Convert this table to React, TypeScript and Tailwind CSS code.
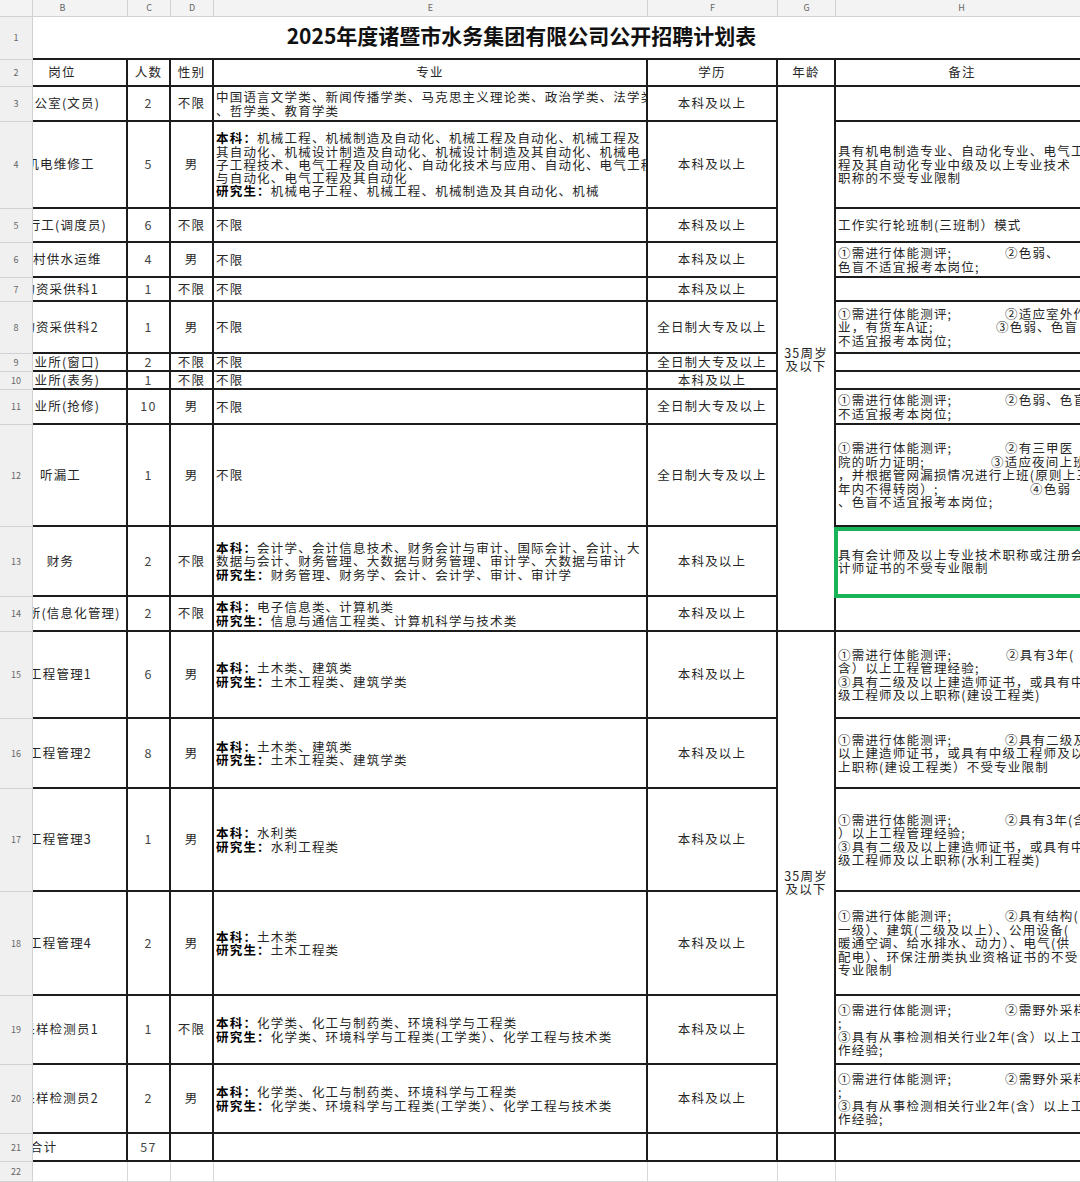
type ELine = { b?: string; t: string };
type HLine = string | [string, string, string];

type Row = {
  n: number;
  pos: string;
  num: string;
  sex: string;
  major: ELine[];
  edu: string;
  age?: "first" | "second";
  note: HLine[];
  box?: boolean;
};

const P = "①需进行体能测评;";
const BX = [{ t: "不限" }];

const rows: Row[] = [
  {
    n: 3, pos: "办公室(文员)", num: "2", sex: "不限",
    major: [{ t: "中国语言文学类、新闻传播学类、马克思主义理论类、政治学类、法学类" }, { t: "、哲学类、教育学类" }],
    edu: "本科及以上", age: "first", note: [],
  },
  {
    n: 4, pos: "机电维修工", num: "5", sex: "男",
    major: [
      { b: "本科：", t: "机械工程、机械制造及自动化、机械工程及自动化、机械工程及" },
      { t: "其自动化、机械设计制造及自动化、机械设计制造及其自动化、机械电" },
      { t: "子工程技术、电气工程及自动化、自动化技术与应用、自动化、电气工程" },
      { t: "与自动化、电气工程及其自动化" },
      { b: "研究生：", t: "机械电子工程、机械工程、机械制造及其自动化、机械" },
    ],
    edu: "本科及以上",
    note: ["具有机电制造专业、自动化专业、电气工程", "程及其自动化专业中级及以上专业技术", "职称的不受专业限制"],
  },
  { n: 5, pos: "运行工(调度员)", num: "6", sex: "不限", major: BX, edu: "本科及以上", note: ["工作实行轮班制(三班制）模式"] },
  {
    n: 6, pos: "农村供水运维", num: "4", sex: "男", major: BX, edu: "本科及以上",
    note: [[P, "w-[167px]", "②色弱、"], "色盲不适宜报考本岗位;"],
  },
  { n: 7, pos: "物资采供科1", num: "1", sex: "不限", major: BX, edu: "本科及以上", note: [] },
  {
    n: 8, pos: "物资采供科2", num: "1", sex: "男", major: BX, edu: "全日制大专及以上",
    note: [[P, "w-[167px]", "②适应室外作"], ["业，有货车A证;", "w-[158px]", "③色弱、色盲"], "不适宜报考本岗位;"],
  },
  { n: 9, pos: "营业所(窗口)", num: "2", sex: "不限", major: BX, edu: "全日制大专及以上", note: [] },
  { n: 10, pos: "营业所(表务)", num: "1", sex: "不限", major: BX, edu: "本科及以上", note: [] },
  {
    n: 11, pos: "营业所(抢修)", num: "10", sex: "男", major: BX, edu: "全日制大专及以上",
    note: [[P, "w-[167px]", "②色弱、色盲"], "不适宜报考本岗位;"],
  },
  {
    n: 12, pos: "听漏工", num: "1", sex: "男", major: BX, edu: "全日制大专及以上",
    note: [
      [P, "w-[167px]", "②有三甲医"],
      ["院的听力证明;", "w-[153px]", "③适应夜间上班"],
      "，并根据管网漏损情况进行上班(原则上三",
      ["年内不得转岗）;", "w-[192px]", "④色弱"],
      "、色盲不适宜报考本岗位;",
    ],
  },
  {
    n: 13, pos: "财务", num: "2", sex: "不限",
    major: [
      { b: "本科：", t: "会计学、会计信息技术、财务会计与审计、国际会计、会计、大" },
      { t: "数据与会计、财务管理、大数据与财务管理、审计学、大数据与审计" },
      { b: "研究生：", t: "财务管理、财务学、会计、会计学、审计、审计学" },
    ],
    edu: "本科及以上",
    note: ["具有会计师及以上专业技术职称或注册会", "计师证书的不受专业限制"],
    box: true,
  },
  {
    n: 14, pos: "营业所(信息化管理)", num: "2", sex: "不限",
    major: [{ b: "本科：", t: "电子信息类、计算机类" }, { b: "研究生：", t: "信息与通信工程类、计算机科学与技术类" }],
    edu: "本科及以上", note: [],
  },
  {
    n: 15, pos: "工程管理1", num: "6", sex: "男",
    major: [{ b: "本科：", t: "土木类、建筑类" }, { b: "研究生：", t: "土木工程类、建筑学类" }],
    edu: "本科及以上", age: "second",
    note: [[P, "w-[168px]", "②具有3年("], "含）以上工程管理经验;", "③具有二级及以上建造师证书，或具有中", "级工程师及以上职称(建设工程类)"],
  },
  {
    n: 16, pos: "工程管理2", num: "8", sex: "男",
    major: [{ b: "本科：", t: "土木类、建筑类" }, { b: "研究生：", t: "土木工程类、建筑学类" }],
    edu: "本科及以上",
    note: [[P, "w-[167px]", "②具有二级及"], "以上建造师证书，或具有中级工程师及以", "上职称(建设工程类）不受专业限制"],
  },
  {
    n: 17, pos: "工程管理3", num: "1", sex: "男",
    major: [{ b: "本科：", t: "水利类" }, { b: "研究生：", t: "水利工程类" }],
    edu: "本科及以上",
    note: [[P, "w-[167px]", "②具有3年(含"], "）以上工程管理经验;", "③具有二级及以上建造师证书，或具有中", "级工程师及以上职称(水利工程类)"],
  },
  {
    n: 18, pos: "工程管理4", num: "2", sex: "男",
    major: [{ b: "本科：", t: "土木类" }, { b: "研究生：", t: "土木工程类" }],
    edu: "本科及以上",
    note: [
      [P, "w-[167px]", "②具有结构("],
      "一级）、建筑(二级及以上）、公用设备(",
      "暖通空调、给水排水、动力）、电气(供",
      "配电）、环保注册类执业资格证书的不受",
      "专业限制",
    ],
  },
  {
    n: 19, pos: "采样检测员1", num: "1", sex: "不限",
    major: [{ b: "本科：", t: "化学类、化工与制药类、环境科学与工程类" }, { b: "研究生：", t: "化学类、环境科学与工程类(工学类）、化学工程与技术类" }],
    edu: "本科及以上",
    note: [[P, "w-[167px]", "②需野外采样"], ";", "③具有从事检测相关行业2年(含）以上工", "作经验;"],
  },
  {
    n: 20, pos: "采样检测员2", num: "2", sex: "男",
    major: [{ b: "本科：", t: "化学类、化工与制药类、环境科学与工程类" }, { b: "研究生：", t: "化学类、环境科学与工程类(工学类）、化学工程与技术类" }],
    edu: "本科及以上",
    note: [[P, "w-[167px]", "②需野外采样"], ";", "③具有从事检测相关行业2年(含）以上工", "作经验;"],
  },
];

const cell = "border-r-2 border-b-2 border-[#1c1c1c] overflow-hidden flex items-center";
const rowHead = "col-start-1 bg-[#f0f0f0] border-r border-b border-[#d2d2d2] flex items-center justify-center text-[9px] tracking-normal text-[#666]";
const letters = ["B", "C", "D", "E", "F", "G", "H"];

function Age() {
  return (
    <div className="flex flex-col items-center leading-[13px]">
      <span>35周岁</span>
      <span>及以下</span>
    </div>
  );
}

export default function App() {
  return (
    <div className="w-[1080px] h-[1182px] overflow-hidden bg-white text-[12.5px] tracking-[1.2px] text-[#262626] font-['Noto_Sans_CJK_SC','Noto_Sans',sans-serif]">
      <div className="grid w-[1088px] grid-cols-[33px_95px_43px_43px_434px_130px_58px_252px] grid-rows-[17px_43px_27px_35px_87px_34px_35px_24px_52px_18px_18px_35px_102px_70px_35px_87px_70px_103px_104px_69px_69px_28px_20px]">
        {/* column letters */}
        <div className="col-start-1 bg-[#f3f3f3] border-r border-b border-[#d2d2d2]" />
        {letters.map((l, i) => (
          <div
            key={l}
            className={
              "bg-[#f3f3f3] border-r border-b border-[#d2d2d2] flex items-center justify-center text-[9px] tracking-normal text-[#666] " +
              (i === 0 ? "pr-[35px]" : "")
            }
          >
            {l}
          </div>
        ))}

        {/* title */}
        <div className={rowHead}>1</div>
        <div className="col-start-2 col-span-7 border-b-2 border-[#1c1c1c] flex items-center justify-center pr-[78px] pb-[3px] text-[21px] tracking-normal font-bold text-[#111]">
          2025年度诸暨市水务集团有限公司公开招聘计划表
        </div>

        {/* header */}
        <div className={rowHead}>2</div>
        <div className={`col-start-2 ${cell} justify-center pr-[35px]`}>岗位</div>
        <div className={`col-start-3 ${cell} justify-center`}>人数</div>
        <div className={`col-start-4 ${cell} justify-center`}>性别</div>
        <div className={`col-start-5 ${cell} justify-center`}>专业</div>
        <div className={`col-start-6 ${cell} justify-center`}>学历</div>
        <div className={`col-start-7 ${cell} justify-center`}>年龄</div>
        <div className="col-start-8 border-b-2 border-[#1c1c1c] flex items-center justify-center">备注</div>

        {rows.map((r) => (
          <div key={r.n} className="contents">
            <div className={rowHead}>{r.n}</div>
            <div className={`col-start-2 ${cell} justify-center pr-[38px]`}>
              <span className="whitespace-nowrap shrink-0">{r.pos}</span>
            </div>
            <div className={`col-start-3 ${cell} justify-center text-[#444]`}>{r.num}</div>
            <div className={`col-start-4 ${cell} justify-center`}>{r.sex}</div>
            <div className={`col-start-5 ${cell} pl-[2px]`}>
              <div className="whitespace-nowrap leading-[13.3px] shrink-0">
                {r.major.map((l, i) => (
                  <div key={i}>
                    {l.b && <span className="font-bold text-black">{l.b}</span>}
                    {l.t}
                  </div>
                ))}
              </div>
            </div>
            <div className={`col-start-6 ${cell} justify-center`}>{r.edu}</div>
            {r.age === "first" && (
              <div className={`col-start-7 row-span-12 ${cell} justify-center`}>
                <Age />
              </div>
            )}
            {r.age === "second" && (
              <div className={`col-start-7 row-span-6 ${cell} justify-center`}>
                <Age />
              </div>
            )}
            <div className="col-start-8 relative border-b-2 border-[#1c1c1c] flex items-center pl-[2px]">
              <div className="whitespace-nowrap leading-[13.5px] shrink-0">
                {r.note.map((l, i) =>
                  typeof l === "string" ? (
                    <div key={i}>{l}</div>
                  ) : (
                    <div key={i}>
                      <span className={`inline-block ${l[1]}`}>{l[0]}</span>
                      {l[2]}
                    </div>
                  )
                )}
              </div>
              {r.box && (
                <div className="absolute z-10 -left-[2px] top-0 -bottom-[3px] -right-[10px] border-4 border-[#19b45a]" />
              )}
            </div>
          </div>
        ))}

        {/* total */}
        <div className={rowHead}>21</div>
        <div className={`col-start-2 ${cell} justify-start`}>
          <span className="whitespace-nowrap -ml-[3px]">合计</span>
        </div>
        <div className={`col-start-3 ${cell} justify-center text-[#444]`}>57</div>
        <div className={`col-start-4 ${cell}`} />
        <div className={`col-start-5 ${cell}`} />
        <div className={`col-start-6 ${cell}`} />
        <div className={`col-start-7 ${cell}`} />
        <div className="col-start-8 border-b-2 border-[#1c1c1c]" />

        {/* empty row */}
        <div className={rowHead}>22</div>
        {letters.map((l) => (
          <div key={l} className="border-r border-b border-[#d8d8d8]" />
        ))}
      </div>
    </div>
  );
}
